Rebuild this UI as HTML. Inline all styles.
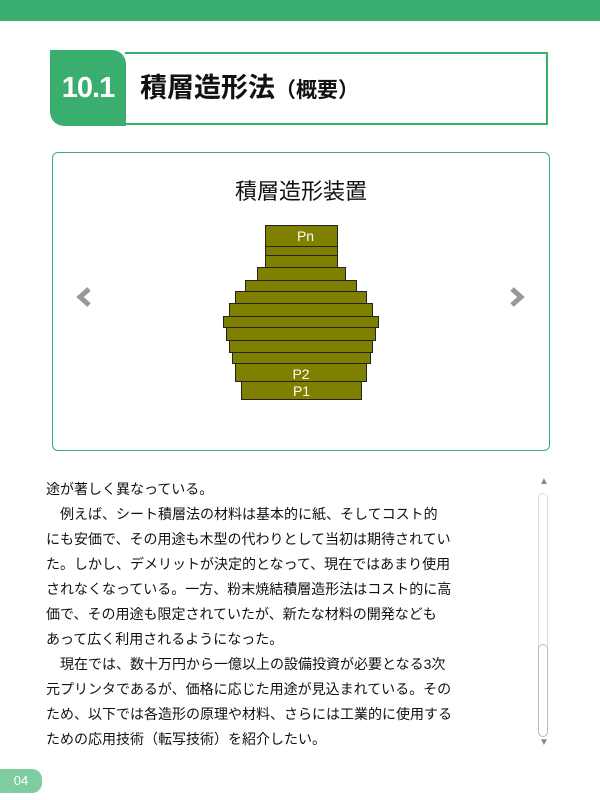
<!DOCTYPE html>
<html><head><meta charset="utf-8"><style>
body{margin:0;width:600px;height:800px;background:#fff;position:relative;overflow:hidden;font-family:"Liberation Sans","Noto Sans CJK JP",sans-serif}
.abs{position:absolute}
.top{left:0;top:0;width:600px;height:21px;background:#3aae6e}
.badge{left:50px;top:50px;width:76px;height:76px;background:#3aae6e;border-radius:0 14px 0 14px;color:#fff;font-weight:bold;font-size:29px;line-height:76px;text-align:center;letter-spacing:-1px}
.tbox{left:125px;top:52px;width:421px;height:69px;border:2px solid #3aae6e;border-left:none}
.ttl{left:140px;top:52px;height:73px;line-height:73px;font-size:27px;font-weight:bold;color:#111}
.ttl small{font-size:21px}
.card{left:52px;top:152px;width:496px;height:297px;border:1px solid #3aae6e;border-radius:6px}
.ct{left:52px;width:498px;top:174px;text-align:center;font-size:22px;color:#111}
.l{position:absolute;background:#808000;border:1px solid #222;box-sizing:border-box;color:#fff;font-size:14px;text-align:center}
.txt{left:46px;top:477px;font-size:14px;line-height:25px;color:#111;white-space:pre}
.trk{left:538px;top:493px;width:10px;height:244px;border:1px solid #ddd;border-radius:6px;box-sizing:border-box}
.thb{left:538px;top:644px;width:10px;height:93px;border:1px solid #bbb;border-radius:6px;box-sizing:border-box}
.pg{left:0;top:769px;width:42px;height:24px;background:#7fcca0;border-radius:0 10px 10px 0;color:#fff;font-size:13px;line-height:24px;text-align:center}
</style></head><body>
<div class="abs top"></div>
<div class="abs tbox"></div>
<div class="abs badge">10.1</div>
<div class="abs ttl">積層造形法<small>（概要）</small></div>
<div class="abs card"></div>
<div class="abs ct">積層造形装置</div>
<svg class="abs" style="left:74px;top:287px" width="20" height="20"><path d="M15 2 L6 10 L15 18" fill="none" stroke="#999" stroke-width="5"/></svg>
<svg class="abs" style="left:507px;top:287px" width="20" height="20"><path d="M5 2 L14 10 L5 18" fill="none" stroke="#999" stroke-width="5"/></svg>
<div class="l" style="left:265px;top:225px;width:73px;height:22px;line-height:20px;padding-left:8px">Pn</div>
<div class="l" style="left:265px;top:246px;width:73px;height:10px"></div>
<div class="l" style="left:265px;top:255px;width:73px;height:13px"></div>
<div class="l" style="left:257px;top:267px;width:89px;height:14px"></div>
<div class="l" style="left:245px;top:280px;width:112px;height:12px"></div>
<div class="l" style="left:235px;top:291px;width:132px;height:13px"></div>
<div class="l" style="left:229px;top:303px;width:144px;height:14px"></div>
<div class="l" style="left:223px;top:316px;width:156px;height:12px"></div>
<div class="l" style="left:226px;top:327px;width:150px;height:14px"></div>
<div class="l" style="left:229px;top:340px;width:144px;height:13px"></div>
<div class="l" style="left:232px;top:352px;width:139px;height:12px"></div>
<div class="l" style="left:235px;top:363px;width:132px;height:19px;line-height:20px">P2</div>
<div class="l" style="left:241px;top:381px;width:121px;height:19px;line-height:18px">P1</div>
<div class="abs txt">途が著しく異なっている。
　例えば、シート積層法の材料は基本的に紙、そしてコスト的
にも安価で、その用途も木型の代わりとして当初は期待されてい
た。しかし、デメリットが決定的となって、現在ではあまり使用
されなくなっている。一方、粉末焼結積層造形法はコスト的に高
価で、その用途も限定されていたが、新たな材料の開発なども
あって広く利用されるようになった。
　現在では、数十万円から一億以上の設備投資が必要となる3次
元プリンタであるが、価格に応じた用途が見込まれている。その
ため、以下では各造形の原理や材料、さらには工業的に使用する
ための応用技術（転写技術）を紹介したい。</div>
<div class="abs" style="left:539px;top:476px;font-size:10px;color:#888">&#9650;</div>
<div class="abs trk"></div>
<div class="abs thb"></div>
<div class="abs" style="left:539px;top:737px;font-size:10px;color:#888">&#9660;</div>
<div class="abs pg">04</div>
</body></html>
